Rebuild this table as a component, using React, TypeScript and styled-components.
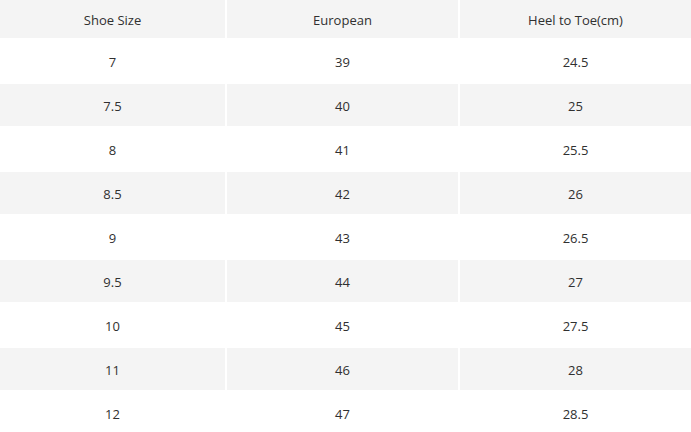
import React from "react";
import styled, { createGlobalStyle } from "styled-components";

const Global = createGlobalStyle`
  html, body { margin: 0; padding: 0; background: #ffffff; }
  body { font-family: "Open Sans", "Liberation Sans", sans-serif; }
`;

const Table = styled.div`
  display: grid;
  grid-template-columns: 225px 231px 1fr;
  grid-template-rows: 38px;
  grid-auto-rows: 42px;
  gap: 2px;
  width: 691px;
  background: #ffffff;
`;

const Row = styled.div`
  display: contents;
`;

const Cell = styled.div<{ $shade: boolean }>`
  display: flex;
  align-items: center;
  justify-content: center;
  padding-top: 2px;
  box-sizing: border-box;
  background: ${(p) => (p.$shade ? "#f4f4f4" : "#ffffff")};
  color: #303030;
  font-size: 13px;
  line-height: 1;
`;

const rows: [string, string, string][] = [
  ["7", "39", "24.5"],
  ["7.5", "40", "25"],
  ["8", "41", "25.5"],
  ["8.5", "42", "26"],
  ["9", "43", "26.5"],
  ["9.5", "44", "27"],
  ["10", "45", "27.5"],
  ["11", "46", "28"],
  ["12", "47", "28.5"],
];

export default function App() {
  return (
    <>
      <Global />
      <Table>
        <Row>
          <Cell $shade>Shoe Size</Cell>
          <Cell $shade>European</Cell>
          <Cell $shade>Heel to Toe(cm)</Cell>
        </Row>
        {rows.map((r, i) => (
          <Row key={i}>
            {r.map((v, j) => (
              <Cell key={j} $shade={i % 2 === 1}>
                {v}
              </Cell>
            ))}
          </Row>
        ))}
      </Table>
    </>
  );
}
